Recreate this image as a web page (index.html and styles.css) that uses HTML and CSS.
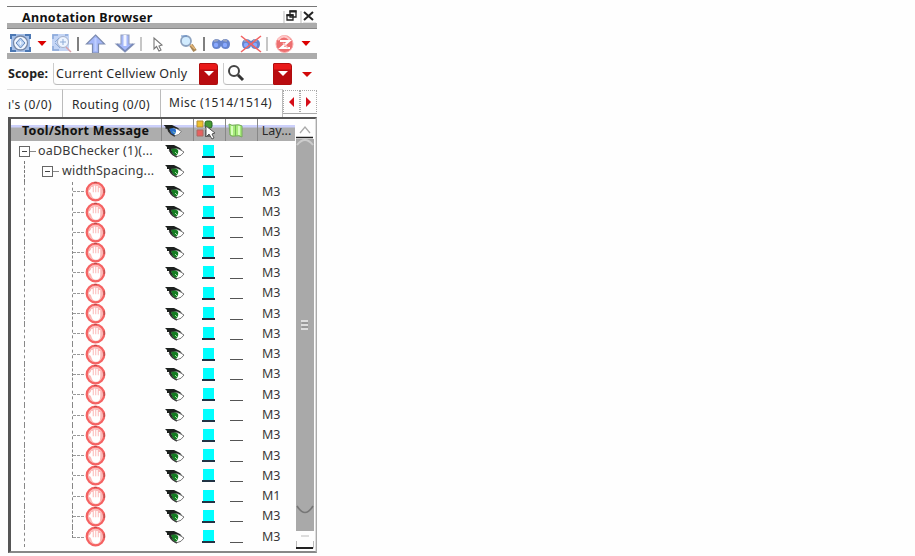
FILE: index.html
```
<!DOCTYPE html>
<html lang="en">
<head>
<meta charset="utf-8">
<title>Annotation Browser</title>
<link rel="stylesheet" href="styles.css">
</head>
<body>
<svg class="defs" aria-hidden="true">
  <symbol id="eye" viewBox="0 0 20 16">
    <path d="M4 7Q9 4 14 6L19 9Q17 13 11 14Q6 12 4 7Z" fill="#fff" stroke="#777" stroke-width="1"/>
    <path d="M6 6Q10 4 13 7Q14 10 11 13Q7 12 6 6Z" fill="currentColor"/>
    <path d="M10 9l2 2" stroke="#9ce09c" stroke-width="1"/>
    <path d="M0 2L9 2L15 5L17 7L11 5L6 6L8 11L5 9L4 6L2 6L2 4Z" fill="#1d211f"/>
    <path d="M5 8q2 4 7 6" fill="none" stroke="#333" stroke-width="1.2"/>
  </symbol>
  <symbol id="stop" viewBox="0 0 21 21">
    <circle cx="10.5" cy="10.5" r="8.8" fill="#fbb9b7" stroke="#f56262" stroke-width="2.2"/>
    <path d="M4 10Q7 11 7 13V6M9.500 12V4.500M12 12V5M14.500 13V7M7 12H14.500Q14.500 17 11 17Q8 17 7 13Z" fill="#fff" stroke="#fff" stroke-width="1.5"/>
    <path d="M5 6q5-5 11 0" fill="none" stroke="#fbb" stroke-width="1"/>
    <path d="M19.2 8v4M9 1.500h3" stroke="#b85050" stroke-width="1.2"/>
  </symbol>
  <symbol id="binoc" viewBox="0 0 20 14">
    <path d="M1 7Q1 3 5 2Q8 2 10 4Q12 2 15 2Q19 3 19 7Q19 12 14.500 12Q11 12 10 9Q9 12 5.500 12Q1 12 1 7Z" fill="#6684cd"/>
    <path d="M3 4l4-1M12 3l4 1" stroke="#9aa5bf" stroke-width="2"/>
    <circle cx="5" cy="8" r="2.200" fill="#88a8ff"/><circle cx="14" cy="8" r="2.200" fill="#88a8ff"/>
  </symbol>
</svg>
<main class="panel">
  <header class="title"><h1>Annotation Browser</h1>
    <svg class="winbtns" viewBox="0 0 34 16" width="34" height="16">
      <path d="M1 3v12M18 3v12" stroke="#bbb"/>
      <path d="M7 3H13V9H7ZM4 7H10V12H4Z" fill="#fff" stroke="#222" stroke-width="1.3"/>
      <path d="M6.5 3.5H13.5M3.5 7.3H10.5" stroke="#222" stroke-width="2"/>
      <path d="M21 4L30 12M30 4L21 12" stroke="#222" stroke-width="2"/><path d="M20 15H33" stroke="#ccc"/>
    </svg>
  </header>
  <div class="band"></div>
  <nav class="toolbar">
    <svg viewBox="0 0 310 24" width="310" height="24">
      <rect x="4" y="5" width="19" height="18" fill="#a4bfe8"/>
      <path d="M4 10V6H9M18 6H23V10M23 18V22H18M9 22H4V18" fill="none" stroke="#4c78b4" stroke-width="2"/>
      <circle cx="13.5" cy="14" r="7" fill="#f2f7ff" stroke="#7888a5" stroke-width="1.3"/>
      <path d="M13.5 9L18 14L13.5 19L9 14Z" fill="#b7d0f2" stroke="#6688ba"/><path d="M13.5 12v4M11.5 14h4" stroke="#eef5ff"/>
      <path d="M30.5 12H39.5L35 17Z" fill="#dc0000"/>
      <rect x="45" y="5" width="17" height="17" fill="#c4d5f5"/>
      <path d="M46 10V6H51M46 17V21H52M58 6H61" fill="none" stroke="#88a7d8" stroke-width="1.5"/>
      <circle cx="56" cy="13" r="5.5" fill="#edf4ff" stroke="#a5b1ca"/><path d="M53 13h6M56 10v6M48 13l4-4M48 14l5 5" stroke="#8dabd7"/>
      <path d="M59 18L64 23" fill="none" stroke="#d8a0a8" stroke-width="1.5"/>
      <path d="M71 8v14M197 8v14" stroke="#555" stroke-width="1.5"/>
      <path d="M134 8v14M260 8v14" stroke="#b4b4b4" stroke-width="1.5"/>
      <path d="M88.500 6L97.500 15H91.500V24H85.500V15H79.500Z" fill="#a5b8fa" stroke="#7d8caf" stroke-width="1.2"/>
      <path d="M88.500 9V22" stroke="#c0d0ff" stroke-width="2"/>
      <path d="M118 23L127 15L122 15V6H114V15H109Z" fill="#a5b8fa" stroke="#94a0bd" stroke-width="1.1"/>
      <path d="M118 6V17" stroke="#f2f5ff" stroke-width="3"/><path d="M110 15L118 22L126 15" fill="none" stroke="#7587b8" stroke-width="1.4"/>
      <path d="M147 9V20L149.5 17.5L152 22L154 21L152 17L155 16Z" fill="#fff" stroke="#777" stroke-width="1.1"/>
      <path d="M184 16L188 22" stroke="#a88757" stroke-width="4"/><path d="M183 15L188 20" stroke="#e8b878" stroke-width="1.5"/>
      <circle cx="179" cy="12" r="5" fill="#d2ecff" stroke="#8da2bf" stroke-width="1.8"/><path d="M174 7h6" stroke="#648ec8"/>
      <use href="#binoc" x="204" y="8" width="20" height="14"/>
      <use href="#binoc" x="234" y="8" width="20" height="14"/>
      <path d="M234 7L254 23M254 7L234 23" stroke="#f36464" stroke-width="1.6"/>
      <circle cx="277.500" cy="15" r="8.500" fill="#ed6f70" stroke="#f9abab"/><path d="M271 11q6-7 12 0" fill="none" stroke="#ffc8c8" stroke-width="2"/>
      <path d="M273 12H282L274 19H283" fill="none" stroke="#fff" stroke-width="2.2"/><path d="M276 14l5 5" stroke="#fbc2c2" stroke-width="1.5"/>
      <path d="M294.500 12H303.500L299 17Z" fill="#dc0000"/>
    </svg>
  </nav>
  <div class="band"></div>
  <section class="scope">
    <b>Scope:</b>
    <div class="combo current"><span>Current Cellview Only</span><i class="drop"></i></div>
    <div class="combo search"><svg viewBox="0 0 20 20" width="20" height="20"><circle cx="7" cy="7" r="5" fill="#fff" stroke="#444" stroke-width="2"/><path d="M11 11L16 16" stroke="#333" stroke-width="3"/></svg><i class="drop"></i></div>
    <i class="caret"></i>
  </section>
  <nav class="tabs">
    <span class="tab first">ı's (0/0)</span><span class="tab second">Routing (0/0)</span><span class="tab third">Misc (1514/1514)</span>
    <span class="page"><i class="left"></i></span><span class="page"><i class="right"></i></span>
  </nav>
  <section class="table">
    <div class="content">
      <div class="head">
        <b>Tool/Short Message</b>
        <span class="col"><svg class="blue" width="20" height="15"><use href="#eye" width="20" height="15"/></svg></span>
        <span class="col"><svg class="pick" width="22" height="20" viewBox="0 0 22 20"><path d="M2 1h6v6H2z" fill="#efc22e" stroke="#b58d35"/><path d="M2 10h6v6H2z" fill="#e86060" stroke="#ad6960"/><rect x="10" y="1" width="7" height="7" rx="2" fill="#439b35" stroke="#286323"/><path d="M10 10h5v7h-5z" fill="#666"/><path d="M11 6V17L14 14L17 19L19 18L17 14L20 13Z" fill="#fff" stroke="#555"/></svg></span>
        <span class="col flag"><svg width="18" height="17" viewBox="0 0 18 17"><path d="M2 2Q5 4 8 3Q12 2 15 4V15Q12 13 8 14Q5 15 3 13Z" fill="#a6eb7a" stroke="#76aa5b"/><path d="M5 4v9M12 4v9" stroke="#d9ffbf" stroke-width="2"/><path d="M8.500 3v11" stroke="#75b557"/></svg></span>
        <span class="col lay">Lay...</span>
      </div>
      <div class="rows" id="rows"></div>
    </div>
    <aside class="scroll">
      <svg class="up" viewBox="0 0 20 29" width="20" height="29"><path d="M5 14L10 8L15 14" fill="none" stroke="#aaa" stroke-width="1.3"/><path d="M1 18.500H18" stroke="#222" stroke-width="1.5"/><path d="M1 20H19V29H1Z" fill="#a9a9a9"/><path d="M2 26Q10 16 18 26" fill="none" stroke="#ccc" stroke-width="2"/></svg>
      <span class="thumb"><svg class="grip" viewBox="0 0 8 10" width="8" height="10"><path d="M0 1H7M0 5H7M0 9H7" stroke="#ddd" stroke-width="2"/><path d="M1 3H7M1 7H7" stroke="#888"/></svg></span>
      <svg viewBox="0 0 20 46" width="20" height="46"><path d="M1 0H19V26H1Z" fill="#a9a9a9"/><path d="M2 1Q10 14 18 1" fill="none" stroke="#777" stroke-width="1.6"/><path d="M6 31H14" stroke="#ddd" stroke-width="2"/><path d="M1.500 36V43H18.500V36" fill="none" stroke="#bbb"/><path d="M1 43H18" stroke="#222" stroke-width="2"/></svg>
    </aside>
  </section>
</main>
<script src="rows.js"></script>
</body>
</html>
```
FILE: styles.css
```
* { box-sizing: border-box; }
body { margin: 0; background: #fefefe; color: #292929; font: 12.5px/20px "Noto Sans", "Open Sans", sans-serif; overflow: hidden; }
.defs { position: absolute; width: 0; height: 0; }
svg { display: block; flex: none; }
.panel { width: 310px; height: 547px; margin: 6px 0 0 7px; border-top: 1px solid #777; display: flex; flex-direction: column; white-space: nowrap; }
.title { height: 16px; padding: 0 0 0 15px; display: flex; justify-content: space-between; }
.title h1 { margin: 0; font-size: 12.5px; line-height: 21px; letter-spacing: .3px; color: #111; }
.winbtns { margin-top: 1px; }
.band { height: 6px; flex: none; background: #acacac; border-bottom: 1px solid #888; }
.toolbar { height: 24px; flex: none; }
.toolbar + .band { border-bottom-color: #acacac; }
.scope { height: 30px; flex: none; display: flex; align-items: center; }
.scope b { width: 46px; padding-left: 1px; color: #222; }
.combo { height: 22px; display: flex; align-items: center; justify-content: space-between; border-bottom: 1px solid #bbb; border-left: 1px solid #ccc; border-radius: 0 0 0 4px; }
.current { width: 165px; padding-left: 2px; letter-spacing: .25px; }
.search { width: 69px; margin-left: 5px; padding-left: 3px; }
.drop { width: 19px; height: 22px; background: linear-gradient(#e91919 0 25%, #b90b0f 30%); border: 1px solid #b00d0d; border-radius: 1px 3px 2px 1px; display: grid; place-items: center; }
.drop::after, .caret { content: ""; width: 0; height: 0; border: solid transparent; border-width: 5px 5px 0; border-top-color: #fff; }
.caret { border-top-color: #d20a0a; margin-left: 10px; }
.tabs { height: 28px; flex: none; display: flex; font-size: 12px; }
.tab { border-top: 1px solid #ddd; border-right: 1px solid #bbb; line-height: 29px; letter-spacing: .4px; }
.first { width: 56px; padding-left: 1px; letter-spacing: .5px; }
.second { width: 98px; padding-left: 9px; }
.third { width: 122px; padding-left: 8px; line-height: 26px; letter-spacing: .5px; }
.page { width: 17px; height: 24px; margin-top: 1px; border: 1px dotted #aaa; border-bottom: 1px solid #aaa; display: grid; place-items: center; }
.left, .right { width: 0; height: 0; border: 5px solid transparent; border-left-width: 0; border-right: 5px solid #d50d18; }
.right { border-left: 5px solid #d50d18; border-right-width: 0; }
.table { flex: 1; min-height: 0; margin-left: 1px; border: solid #555; border-width: 2px 2px 2px 3px; border-right-color: #aaa; border-bottom-color: #888; display: flex; }
.content { width: 284px; }
.head { height: 22px; display: flex; background: linear-gradient(#fff 0 6px, #ccd0fb 6px 8px, #adadad 9px); }
.head b { width: 150px; padding-left: 11px; line-height: 23px; letter-spacing: .25px; color: #111; }
.col { width: 32px; border-left: 1px solid #888; display: flex; align-items: center; justify-content: center; }
.blue { color: #286dcc; margin-left: -10px; }
.pick { margin-left: -8px; }
.flag { padding-right: 12px; }
.head .lay { width: 38px; line-height: 23px; }
.rows { display: grid; grid-template-rows: repeat(20, 20.3px); }
.row { display: grid; grid-template-columns: 150px 32px 32px 32px 38px; align-items: center; color: #383838; font-size: 12.5px; height: 20.3px; }
.message { display: flex; align-items: center; height: 20.3px; padding-left: 10px; }
.branch { width: 12px; border-left: 1px dashed #777; align-self: stretch; margin-left: 3px; flex: none; }
.box { width: 11px; height: 11px; border: 1px solid #666; display: grid; place-items: center; flex: none; }
.box::after { content: ""; width: 5px; height: 1px; background: #444; }
.stub { width: 6px; border-top: 1px dashed #888; flex: none; }
.group .box { margin-left: 6px; }
.message em { font-style: normal; margin-left: 3px; letter-spacing: .2px; }
.trunk { width: 48px; margin-left: 3px; border-left: 1px dashed #888; align-self: stretch; flex: none; }
.twig { align-self: stretch; width: 13px; flex: none; border-left: 1px dashed #888; display: flex; align-items: center; }
.twig::after { content: ""; width: 11px; border-top: 1px dashed #999; }
.row:last-child .twig { align-self: flex-start; height: 11px; align-items: flex-end; }
.root { padding-left: 8px; }
.root em { margin-left: 2px; }
.eye { color: #157b22; margin: 0 0 0 4px; }
.swatch { width: 13px; height: 13px; margin: 0 0 0 9px; background: linear-gradient(90deg, transparent 1px, #00ffff 1px 12px, transparent 12px); border-bottom: 2px solid #234; }
.blank { width: 13px; height: 1px; margin: 11px 0 0 5px; background: #555; }
.layer { padding-left: 5px; line-height: 20px; }
.scroll { width: 21px; display: flex; flex-direction: column; border-right: 1px solid #ddd; }
.thumb { flex: 1; margin: 0 1px; padding-bottom: 4px; background: #a9a9a9; display: grid; place-items: center; }
```
FILE: rows.js
```
const layers = ["", "", ...Array(15).fill("M3"), "M1", "M3", "M3"];
const messages = [
  '<div class="message root"><i class="box"></i><i class="stub"></i><em>oaDBChecker (1)(...</em></div>',
  '<div class="message group"><i class="branch"></i><i class="box"></i><i class="stub"></i><em>widthSpacing...</em></div>'
];
const item = '<div class="message"><i class="trunk"></i><i class="twig"></i><svg width="21" height="21"><use href="#stop" width="21" height="21"/></svg></div>';
document.getElementById("rows").innerHTML = layers.map((layer, i) =>
  `<div class="row">${messages[i] || item}<svg class="eye" width="20" height="16"><use href="#eye" width="20" height="16"/></svg><i class="swatch"></i><i class="blank"></i><span class="layer">${layer}</span></div>`
).join("");
```
